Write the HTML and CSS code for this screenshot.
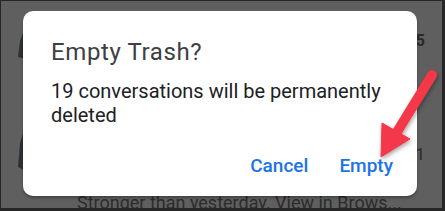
FILE: index.html
```html
<!DOCTYPE html>
<html>
<head>
<meta charset="utf-8">
<link rel="stylesheet" href="styles.css">
</head>
<body>
<div class="screen">
  <div class="list">
    <div class="row row-one">
      <svg class="avatar" width="12" height="40" viewBox="0 0 12 40"><path d="M9 0 L4 14 L2 30 L10 32 Z" fill="#2b3136"/></svg>
      <span class="meta bold">5</span>
    </div>
    <div class="row row-two">
      <svg class="avatar" width="12" height="48" viewBox="0 0 12 48"><path d="M9 0 L4 16 L2 40 L10 44 Z" fill="#2b3136"/></svg>
      <span class="meta">1</span>
    </div>
    <div class="snippet">Stronger than yesterday. View in Brows...</div>
  </div>

  <div class="dialog">
    <h1 class="title">Empty Trash?</h1>
    <p class="message">19 conversations will be permanently deleted</p>
    <div class="actions">
      <span class="btn">Cancel</span>
      <span class="btn">Empty</span>
    </div>
  </div>

  <svg class="arrow" width="445" height="211" viewBox="0 0 445 211">
    <defs>
      <filter id="sh" x="-20%" y="-20%" width="140%" height="140%">
        <feDropShadow dx="1" dy="2" stdDeviation="2" flood-color="#000" flood-opacity="0.35"/>
      </filter>
    </defs>
    <g filter="url(#sh)" fill="#f5384a" stroke="#f5384a">
      <line x1="432" y1="75" x2="397" y2="132" stroke-width="10" stroke-linecap="round"/>
      <polygon points="382,123 410,139 381,157" stroke-width="1" stroke-linejoin="round"/>
    </g>
  </svg>
</div>
</body>
</html>
```
FILE: styles.css
```css
* { box-sizing: border-box; }
html, body { margin: 0; padding: 0; }
body {
  width: 445px;
  height: 211px;
  overflow: hidden;
  font-family: Roboto, "Liberation Sans", sans-serif;
}
.screen {
  position: relative;
  width: 445px;
  height: 211px;
  background: #5f5f5f;
  border-top: 1px solid #262626;
  border-left: 1px solid #262626;
  border-right: 3px solid #262626;
  border-bottom: 3px solid #262626;
  overflow: hidden;
}
.list {
  display: flex;
  flex-direction: column;
  padding: 26px 0 0 15px;
}
.row {
  display: flex;
  justify-content: space-between;
  align-items: flex-start;
  padding-right: 17px;
}
.row-one { height: 100px; }
.row-two { height: 66px; }
.meta {
  font-size: 16px;
  color: #2a2a2a;
  line-height: 18px;
}
.bold { font-weight: 700; margin-top: 5px; }
.row-two .meta { margin-top: 18px; font-size: 17px; }
.snippet {
  margin-left: 61px;
  font-size: 18px;
  color: #2c2c2c;
  line-height: 20px;
  margin-top: 0;
}
.dialog {
  position: absolute;
  left: 22px;
  top: 10px;
  width: 394px;
  height: 185px;
  background: #ffffff;
  border-radius: 10px;
  box-shadow: 0 2px 3px rgba(0,0,0,0.3);
  padding: 26px 24px 0 28px;
  display: flex;
  flex-direction: column;
}
.title {
  margin: 0;
  font-size: 24px;
  font-weight: 400;
  line-height: 30px;
  color: #3c4043;
  letter-spacing: 0.6px;
}
.message {
  margin: 12px 0 0;
  font-size: 20px;
  line-height: 24px;
  color: #202124;
}
.actions {
  display: flex;
  justify-content: flex-end;
  gap: 31px;
  margin-top: 27px;
}
.btn {
  font-size: 19px;
  line-height: 24px;
  font-weight: 500;
  color: #1a73e8;
}
.arrow {
  position: absolute;
  left: -1px;
  top: -1px;
}
```
